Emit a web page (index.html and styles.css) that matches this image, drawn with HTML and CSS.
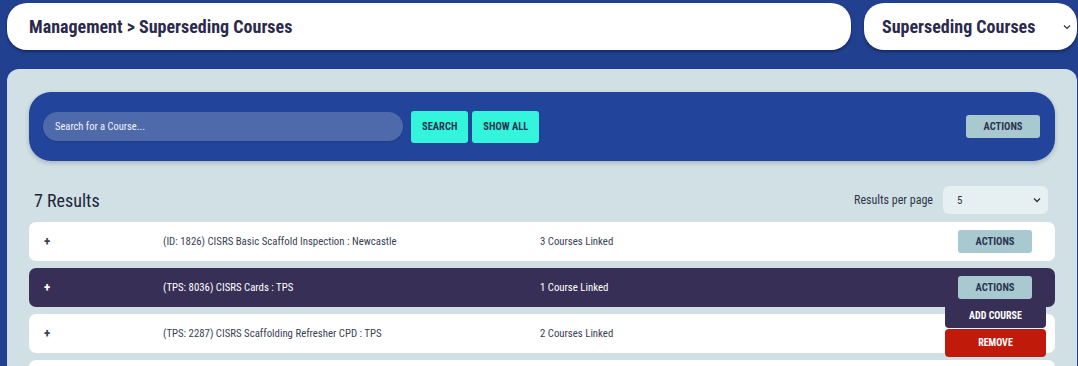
FILE: index.html
```html
<!DOCTYPE html>
<html>

<head>
    <meta charset="UTF-8">
    <title>Superseding Courses</title>
    <link rel="stylesheet" href="styles.css">
</head>

<body>
    <header class="top">
        <div class="crumb">Management &gt; Superseding Courses</div>
        <div class="page-pick">
            <span>Superseding Courses</span>
            <svg class="chev" width="8" height="6" viewBox="0 0 8 6"><path d="M1 1.5 4 4.5 7 1.5" fill="none" stroke="#333" stroke-width="1.2"/></svg>
        </div>
    </header>

    <main class="panel">
        <div class="searchbar">
            <div class="search-input">Search for a Course...</div>
            <button class="btn cyan">SEARCH</button>
            <button class="btn cyan">SHOW ALL</button>
            <button class="btn grey push">ACTIONS</button>
        </div>

        <div class="results-head">
            <h2>7 Results</h2>
            <label>Results per page</label>
            <div class="per-page">
                <span>5</span>
                <svg width="8" height="6" viewBox="0 0 8 6"><path d="M1 1.5 4 4.5 7 1.5" fill="none" stroke="#333" stroke-width="1.3"/></svg>
            </div>
        </div>

        <div class="rows">
            <div class="row">
                <span class="plus">+</span>
                <span>(ID: 1826) CISRS Basic Scaffold Inspection : Newcastle</span>
                <span>3 Courses Linked</span>
                <div class="act"><button class="btn grey">ACTIONS</button></div>
            </div>
            <div class="row dark">
                <span class="plus">+</span>
                <span>(TPS: 8036) CISRS Cards : TPS</span>
                <span>1 Course Linked</span>
                <div class="act">
                    <button class="btn grey">ACTIONS</button>
                    <div class="menu">
                        <div class="menu-item">ADD COURSE</div>
                        <div class="menu-item red">REMOVE</div>
                    </div>
                </div>
            </div>
            <div class="row">
                <span class="plus">+</span>
                <span>(TPS: 2287) CISRS Scaffolding Refresher CPD : TPS</span>
                <span>2 Courses Linked</span>
                <div class="act"></div>
            </div>
            <div class="row"></div>
        </div>
    </main>
</body>

</html>
```

FILE: styles.css
```css
body {
    margin: 0;
    background: #21408f;
    font-family: "Roboto Condensed", "Liberation Sans Narrow", "DejaVu Sans Condensed", Roboto, sans-serif;
    color: #2b2a4c;
    height: 366px;
    overflow: hidden;
}

.top {
    display: flex;
    gap: 13px;
    padding: 3px 1px 0 7px;
}

.crumb,
.page-pick {
    background: #fff;
    height: 47px;
    border-radius: 20px;
    box-shadow: 0 2px 3px rgba(0, 0, 0, 0.35);
    display: flex;
    align-items: center;
    font-weight: bold;
    font-size: 18px;
}

.crumb {
    flex: 1;
    padding-left: 22px;
}

.page-pick {
    width: 213px;
    padding-left: 18px;
    box-sizing: border-box;
    justify-content: space-between;
    padding-right: 6px;
}

.panel {
    display: block;
    margin: 19px 1px 0 7px;
    background: #d0e0e5;
    border-radius: 12px 12px 0 0;
    padding: 23px 22px 0;
    height: 274px;
    overflow: hidden;
}

.searchbar {
    background: #22449a;
    height: 69px;
    border-radius: 22px;
    display: flex;
    align-items: center;
    padding: 0 15px 0 14px;
    box-shadow: 0 2px 5px rgba(0, 0, 0, 0.2);
}

.search-input {
    width: 360px;
    height: 29px;
    border-radius: 15px;
    background: #4f6aab;
    color: #f0f3fa;
    font-size: 10.5px;
    display: flex;
    align-items: center;
    padding-left: 12px;
    box-sizing: border-box;
    margin-right: 8px;
    box-shadow: 0 1px 2px rgba(0, 0, 0, 0.15);
}

.btn {
    border: none;
    border-radius: 3px;
    font-family: inherit;
    font-weight: bold;
    font-size: 10.5px;
    color: #2b3550;
    padding: 0 11px;
}

.cyan {
    background: #33f5dc;
    height: 32px;
    margin-right: 4px;
}

.grey {
    background: #a9c9d0;
    height: 23px;
    width: 74px;
    padding: 0;
}

.push {
    margin-left: auto;
}

.results-head {
    display: flex;
    align-items: center;
    margin-top: 25px;
    height: 28px;
}

.results-head h2 {
    margin: 0 auto 0 5px;
    font-weight: normal;
    font-size: 18px;
    color: #1e2638;
}

.results-head label {
    font-size: 12px;
    color: #2f3648;
    margin-right: 10px;
}

.per-page {
    width: 105px;
    height: 28px;
    background: #e6eff2;
    border-radius: 6px;
    display: flex;
    align-items: center;
    justify-content: space-between;
    padding: 0 7px 0 14px;
    box-sizing: border-box;
    font-size: 11px;
    color: #333;
    margin-right: 7px;
}

.rows {
    margin-top: 8px;
    display: flex;
    flex-direction: column;
    gap: 7px;
}

.row {
    background: #fff;
    height: 39px;
    flex-shrink: 0;
    border-radius: 7px;
    display: grid;
    grid-template-columns: 119px 377px 1fr 74px;
    align-items: center;
    padding: 0 23px 0 15px;
    font-size: 10.8px;
    color: #3a3f55;
}

.row.dark {
    background: #372f55;
    color: #fff;
}

.plus {
    font-weight: bold;
    font-size: 13px;
}

.act {
    position: relative;
    height: 23px;
}

.menu {
    position: absolute;
    top: 23px;
    left: -13px;
    width: 101px;
    z-index: 2;
}

.menu-item {
    background: #372f55;
    color: #fff;
    font-weight: bold;
    font-size: 10px;
    text-align: center;
    height: 29px;
    line-height: 33px;
    border-radius: 0 0 4px 4px;
}

.menu-item.red {
    background: #c01a0a;
    height: 28px;
    line-height: 28px;
    margin-top: 1px;
    border-radius: 4px;
}
```
